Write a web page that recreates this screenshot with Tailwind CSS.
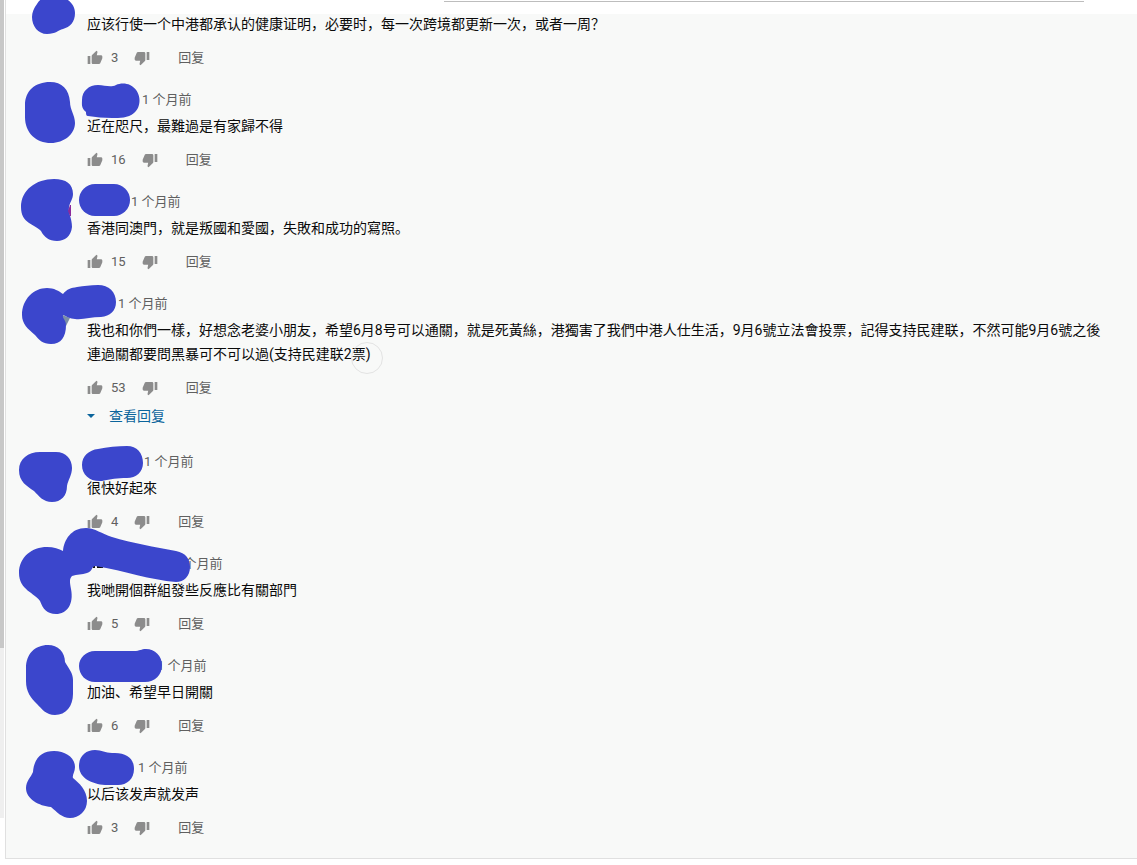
<!DOCTYPE html>
<html lang="zh">
<head>
    <meta charset="UTF-8">
    <meta name="viewport" content="width=device-width, initial-scale=1.0">
    <title>评论</title>
    <script src="https://cdn.jsdelivr.net/npm/@tailwindcss/browser@4"></script>
</head>
<body class="bg-white font-[Roboto,'Noto_Sans_CJK_SC',sans-serif] text-sm text-[#0a0a0a]">
    <!-- Icons -->
    <svg class="hidden">
        <symbol id="up" viewBox="0 0 24 24"><path d="M1 21h4V9H1v12zm22-11c0-1.1-.9-2-2-2h-6.31l.95-4.57.03-.32c0-.41-.17-.79-.44-1.06L14.17 1 7.59 7.59C7.22 7.95 7 8.45 7 9v10c0 1.1.9 2 2 2h9c.83 0 1.54-.5 1.84-1.22l3.02-7.05c.09-.23.14-.47.14-.73v-2z"/></symbol>
        <symbol id="down" viewBox="0 0 24 24"><path d="M15 3H6c-.83 0-1.54.5-1.84 1.22l-3.02 7.05c-.09.23-.14.47-.14.73v2c0 1.1.9 2 2 2h6.31l-.95 4.57-.03.32c0 .41.17.79.44 1.06L9.83 23l6.59-6.59c.36-.36.58-.86.58-1.41V5c0-1.1-.9-2-2-2zm4 0v12h4V3h-4z"/></symbol>
    </svg>

    <div class="flex">
        <!-- Scroll rail -->
        <div class="flex w-[5px] shrink-0 flex-col pr-px">
            <div class="h-[648px] bg-[#c8c8c8]"></div>
            <div class="h-[170px] bg-[#efefef]"></div>
        </div>

        <main class="min-w-0 flex-1 border-b border-l border-[#e0e0e0]">
            <div class="h-[14px] pr-[53px] pl-[438px]">
                <div class="h-0.5 border-b border-[#bdbdbd]"></div>
            </div>

            <!-- Comments -->
            <div class="bg-[#f8f9f8] pb-[14px]">
                <article class="relative pr-8 pb-4 pl-[81px]">
                    <p class="leading-5">应该行使一个中港都承认的健康证明，必要时，每一次跨境都更新一次，或者一周？</p>
                    <div class="mt-2 flex h-8 items-center text-[13px] text-[#606060]">
                        <button aria-label="赞"><svg class="size-4 fill-[#8c8c8c]"><use href="#up"/></svg></button>
                        <span class="mx-2">3</span>
                        <button aria-label="踩" class="ml-2"><svg class="size-4 fill-[#8c8c8c]"><use href="#down"/></svg></button>
                        <button class="ml-7">回复</button>
                    </div>
                    <svg class="pointer-events-none absolute top-0 left-0 h-[76px] w-[200px] overflow-visible fill-[#3b46cc]" viewBox="6 14 200 76">
                        <path d="M37 4C40-1 44-4 54-4C67-4 75 4 75 13C75 22 70 27 63 29C58 30 56 34 47 34C38 34 32 26 32 17C32 12 34 8 37 4Z"/>
                    </svg>
                </article>

                <article class="relative pr-8 pb-4 pl-[81px]">
                    <div class="flex h-5 items-center text-[13px] text-[#606060]"><span class="w-[55px]"></span><a href="#">1 个月前</a></div>
                    <p class="mt-1 leading-6">近在咫尺，最難過是有家歸不得</p>
                    <div class="mt-1.5 flex h-8 items-center text-[13px] text-[#606060]">
                        <button aria-label="赞"><svg class="size-4 fill-[#8c8c8c]"><use href="#up"/></svg></button>
                        <span class="mx-2">16</span>
                        <button aria-label="踩" class="ml-2"><svg class="size-4 fill-[#8c8c8c]"><use href="#down"/></svg></button>
                        <button class="ml-7">回复</button>
                    </div>
                    <svg class="pointer-events-none absolute top-0 left-0 h-[102px] w-[200px] overflow-visible fill-[#3b46cc]" viewBox="6 90 200 102">
                        <path d="M50 82C62 82 69 89 70 102C70 110 75 115 75 123C75 134 64 143 51 143C36 143 25 133 25 117V105C25 91 35 82 50 82Z"/>
                        <path d="M98 85C105 85 110 88 116 85C120 83 126 83 130 85C142 91 142 107 134 113C128 118 120 118 112 118C103 118 96 117 88 116C86 116 86 114 86 112C81 108 82 104 82 100C82 91 89 85 98 85Z"/>
                    </svg>
                </article>

                <article class="relative pr-8 pb-4 pl-[81px]">
                    <div class="flex h-5 items-center text-[13px] text-[#606060]"><span class="w-[44px]"></span><a href="#">1 个月前</a></div>
                    <p class="mt-1 leading-6">香港同澳門，就是叛國和愛國，失敗和成功的寫照。</p>
                    <div class="mt-1.5 flex h-8 items-center text-[13px] text-[#606060]">
                        <button aria-label="赞"><svg class="size-4 fill-[#8c8c8c]"><use href="#up"/></svg></button>
                        <span class="mx-2">15</span>
                        <button aria-label="踩" class="ml-2"><svg class="size-4 fill-[#8c8c8c]"><use href="#down"/></svg></button>
                        <button class="ml-7">回复</button>
                    </div>
                    <svg class="pointer-events-none absolute top-0 left-0 h-[102px] w-[200px] overflow-visible fill-[#3b46cc]" viewBox="6 192 200 102">
                        <path d="M54 179C66 179 73 184 73 194C73 199 70 202 69 207C68 213 72 218 72 227C71 236 65 241 57 241C49 241 44 237 41 231C35 224 21 224 21 207C21 190 36 179 54 179Z"/>
                        <path class="fill-[#8c2a9c]" d="M70 205H71V216H70L68 211Z"/>
                        <rect x="79" y="184" width="51" height="32" rx="16"/>
                    </svg>
                </article>

                <article class="relative pr-8 pb-6 pl-[81px]">
                    <div class="flex h-5 items-center text-[13px] text-[#606060]"><span class="w-[31px]"></span><a href="#">1 个月前</a></div>
                    <p class="mt-1 leading-6">我也和你們一樣，好想念老婆小朋友，希望6月8号可以通關，就是死黃絲，港獨害了我們中港人仕生活，9月6號立法會投票，記得支持民建联，不然可能9月6號之後連過關都要問黑暴可不可以過(支持民建联2票)</p>
                    <div class="mt-1.5 flex h-8 items-center text-[13px] text-[#606060]">
                        <button aria-label="赞"><svg class="size-4 fill-[#8c8c8c]"><use href="#up"/></svg></button>
                        <span class="mx-2">53</span>
                        <button aria-label="踩" class="ml-2"><svg class="size-4 fill-[#8c8c8c]"><use href="#down"/></svg></button>
                        <button class="ml-7">回复</button>
                    </div>
                    <button class="flex h-6 items-center text-[#0b659c]">
                        <svg class="mr-3.5 h-1 w-2 fill-current" viewBox="0 0 8 4"><path d="M0 0h8L4 4z"/></svg>查看回复
                    </button>
                    <svg class="pointer-events-none absolute top-0 left-0 h-[102px] w-[200px] overflow-visible fill-[#3b46cc]" viewBox="6 294 200 102">
                        <path class="fill-[#7b8fa6]" d="M60 314L70 318L66 326Z"/>
                        <path d="M47 288C54 288 59 291 63 294C67 289 71 288 77 287C84 286 90 285 98 285C109 285 116 292 116 302C116 311 110 316 101 317C91 317 83 320 75 319C70 319 66 316 63 315C62 318 66 320 66 325C66 337 61 344 51 344C43 344 39 340 35 335C28 329 22 324 22 315C22 299 34 288 47 288Z"/>
                    </svg>
                    <!-- Touch ring -->
                    <span class="pointer-events-none absolute top-12 left-[345px] size-8 rounded-full border border-[#e3e3e3]"></span>
                </article>

                <article class="relative pr-8 pb-4 pl-[81px]">
                    <div class="flex h-5 items-center text-[13px] text-[#606060]"><span class="w-[57px]"></span><a href="#">1 个月前</a></div>
                    <p class="mt-1 leading-6">很快好起來</p>
                    <div class="mt-1.5 flex h-8 items-center text-[13px] text-[#606060]">
                        <button aria-label="赞"><svg class="size-4 fill-[#8c8c8c]"><use href="#up"/></svg></button>
                        <span class="mx-2">4</span>
                        <button aria-label="踩" class="ml-2"><svg class="size-4 fill-[#8c8c8c]"><use href="#down"/></svg></button>
                        <button class="ml-7">回复</button>
                    </div>
                    <svg class="pointer-events-none absolute top-0 left-0 h-[102px] w-[200px] overflow-visible fill-[#3b46cc]" viewBox="6 452 200 102">
                        <path d="M40 452H56C66 452 72 459 72 468C72 475 68 480 67 486C67 496 61 502 52 502C43 502 39 496 34 491C27 486 19 482 19 470C19 459 28 452 40 452Z"/>
                        <path d="M98 449C107 447 118 446 127 446C137 446 143 453 143 463C143 472 136 478 127 478C117 478 111 479 102 481C90 482 82 475 82 465C82 456 89 450 98 449Z"/>
                    </svg>
                </article>

                <article class="relative pr-8 pb-4 pl-[81px]">
                    <div class="flex h-5 items-center text-[13px] text-[#606060]"><span class="w-[86px]"></span><a href="#">1 个月前</a></div>
                    <p class="mt-1 leading-6">我哋開個群組發些反應比有關部門</p>
                    <div class="mt-1.5 flex h-8 items-center text-[13px] text-[#606060]">
                        <button aria-label="赞"><svg class="size-4 fill-[#8c8c8c]"><use href="#up"/></svg></button>
                        <span class="mx-2">5</span>
                        <button aria-label="踩" class="ml-2"><svg class="size-4 fill-[#8c8c8c]"><use href="#down"/></svg></button>
                        <button class="ml-7">回复</button>
                    </div>
                    <svg class="pointer-events-none absolute top-0 left-0 h-[102px] w-[200px] overflow-visible fill-[#3b46cc]" viewBox="6 554 200 102">
                        <path class="fill-[#111111]" d="M93 566h2v2h-2zM97 564h6v4h-6z"/>
                        <path d="M47 547C54 547 59 549 63 551C64 540 71 528 86 528C95 528 102 534 112 537C132 543 155 547 176 551C186 553 190 559 190 567C190 576 184 582 176 582C150 580 126 571 95 566C91 567 93 571 87 573C82 575 77 574 72 576C69 579 70 583 71 589C74 604 67 614 56 614C47 614 43 609 40 601C35 593 19 590 19 573C19 557 32 547 47 547Z"/>
                    </svg>
                </article>

                <article class="relative pr-8 pb-4 pl-[81px]">
                    <div class="flex h-5 items-center text-[13px] text-[#606060]"><span class="w-[70px]"></span><a href="#">1 个月前</a></div>
                    <p class="mt-1 leading-6">加油、希望早日開關</p>
                    <div class="mt-1.5 flex h-8 items-center text-[13px] text-[#606060]">
                        <button aria-label="赞"><svg class="size-4 fill-[#8c8c8c]"><use href="#up"/></svg></button>
                        <span class="mx-2">6</span>
                        <button aria-label="踩" class="ml-2"><svg class="size-4 fill-[#8c8c8c]"><use href="#down"/></svg></button>
                        <button class="ml-7">回复</button>
                    </div>
                    <svg class="pointer-events-none absolute top-0 left-0 h-[102px] w-[200px] overflow-visible fill-[#3b46cc]" viewBox="6 656 200 102">
                        <path d="M48 645C58 645 65 652 65 662C69 669 73 673 73 680V694C73 706 66 715 55 715C46 715 42 709 37 704C31 698 26 692 26 681V668C26 654 35 645 48 645Z"/>
                        <path d="M95 651H134C140 651 141 649 146 649C155 649 162 656 162 665C162 675 155 682 145 682H95C86 682 79 675 79 666C79 658 86 651 95 651Z"/>
                    </svg>
                </article>

                <article class="relative pr-8 pl-[81px]">
                    <div class="flex h-5 items-center text-[13px] text-[#606060]"><span class="w-[51px]"></span><a href="#">1 个月前</a></div>
                    <p class="mt-1 leading-6">以后该发声就发声</p>
                    <div class="mt-1.5 flex h-8 items-center text-[13px] text-[#606060]">
                        <button aria-label="赞"><svg class="size-4 fill-[#8c8c8c]"><use href="#up"/></svg></button>
                        <span class="mx-2">3</span>
                        <button aria-label="踩" class="ml-2"><svg class="size-4 fill-[#8c8c8c]"><use href="#down"/></svg></button>
                        <button class="ml-7">回复</button>
                    </div>
                    <svg class="pointer-events-none absolute top-0 left-0 h-[102px] w-[200px] overflow-visible fill-[#3b46cc]" viewBox="6 758 200 102">
                        <path d="M54 751C66 751 75 758 75 767C75 772 72 775 73 778C79 783 87 790 87 801C87 811 79 818 70 818C62 818 57 812 51 807C39 806 26 799 26 788C26 781 31 777 33 772C34 758 42 751 54 751Z"/>
                        <path d="M95 750C102 750 105 753 112 753C126 752 134 758 134 769C134 779 127 785 118 785H105C92 784 79 778 79 766C79 756 86 750 95 750Z"/>
                    </svg>
                </article>
            </div>
        </main>
    </div>
</body>
</html>
